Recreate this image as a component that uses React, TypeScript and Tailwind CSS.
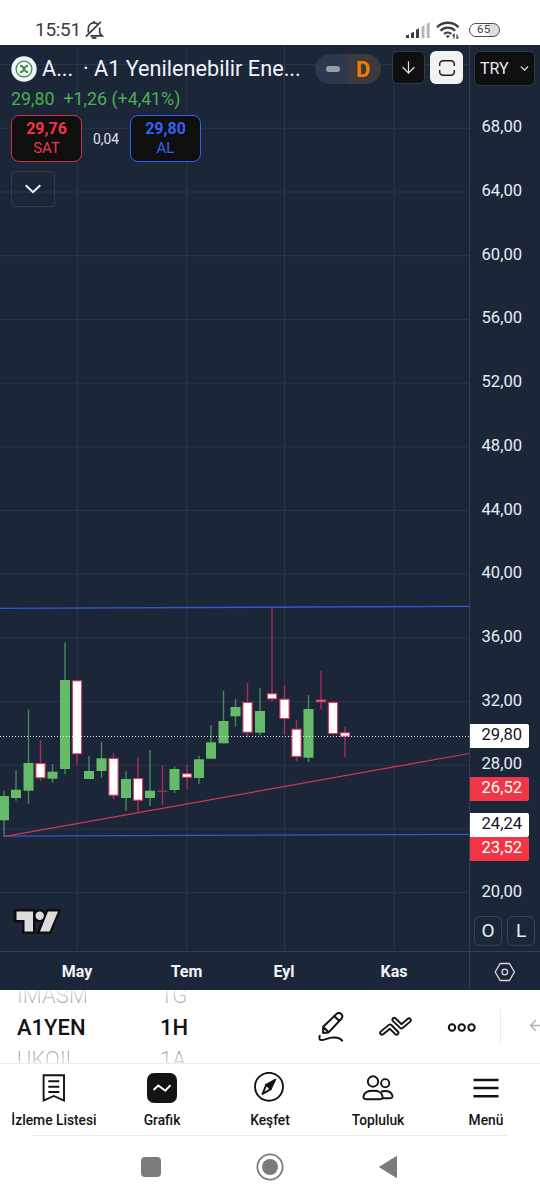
import { ArrowDown, ArrowLeft, ChevronDown } from 'lucide-react';

interface Candle {
  x: number;
  top: number;
  bottom: number;
  high: number;
  low: number;
  up: boolean;
}

const c = (x: number, top: number, bottom: number, high: number, low: number, up: boolean): Candle => ({
  x, top, bottom, high, low, up
});

const candles: Candle[] = [
  c(4, 796, 820.3, 790.7, 836.7, true),
  c(16, 789.7, 798, 770.3, 800.7, true),
  c(28.5, 763, 790.7, 709.7, 803.7, true),
  c(40.5, 763, 778.3, 740, 781, false),
  c(52.5, 771.7, 778.7, 764, 782.7, true),
  c(65, 680, 769, 642.3, 774.3, true),
  c(77, 680.3, 754.3, 680.3, 765, false),
  c(89, 771, 779, 756, 779, true),
  c(101.5, 758.3, 771, 741.7, 777.7, true),
  c(113.5, 758, 795.7, 753, 799.3, false),
  c(126, 779, 798, 771.3, 811, true),
  c(138, 778, 800.7, 757.3, 812, false),
  c(150, 790.7, 798, 750, 806, true),
  c(162.5, 790.5, 791.5, 765.7, 805, false),
  c(174.5, 769, 790, 766.7, 793, true),
  c(187, 773.3, 777.7, 764.7, 789, false),
  c(199, 759.3, 778, 756, 783.7, true),
  c(211, 742.3, 758.7, 725, 758.7, true),
  c(223.5, 721, 743.3, 690.7, 743.3, true),
  c(235.5, 707, 716.3, 699, 726.7, true),
  c(247.5, 702, 732.7, 683, 737.7, false),
  c(260, 711, 732.7, 688, 735, true),
  c(272, 693.3, 699.3, 607.5, 701.5, false),
  c(284.5, 698.7, 719, 685.3, 735, false),
  c(296.5, 728.7, 757, 720, 761, false),
  c(308.5, 709, 757.7, 695, 762, true),
  c(321, 699.7, 702.2, 670.7, 709, false),
  c(333, 702, 734, 701, 735, false),
  c(345, 732.3, 736.7, 726.7, 757.3, false)
];

const gridX = [77, 187, 284.5, 394];
const gridY = [64.5, 128.3, 192, 255.7, 319.4, 383.1, 446.8, 510.5, 574.2, 637.9, 701.6, 765.3, 829, 892.7];
const prices = ['68,00', '64,00', '60,00', '56,00', '52,00', '48,00', '44,00', '40,00', '36,00', '32,00', '28,00', '', '20,00'];

function StatusBar() {
  return (
    <div className="flex h-[45px] items-end justify-between bg-white pr-10 pb-[3px] pl-[35px] text-[#3c3c3c]">
      <div className="flex items-center">
        <span className="text-[19px] leading-6 tracking-[-0.3px]">15:51</span>
        <svg className="ml-1 h-5 w-[19px]" viewBox="0 0 19 20" fill="none" stroke="currentColor" strokeWidth="1.7">
          <path d="M3.3 12.5V8.7c0-3.3 2.2-5.8 5.6-5.8 1.8 0 3.2.6 4.2 1.7M14.7 7.5v5.7l2.5 2.7H5.3M.8 16.6 15.8 1.9" />
          <path d="M6.8 17.9h4.6" strokeWidth="1.9" />
          <path d="M9 1v2" />
        </svg>
      </div>
      <div className="flex h-6 items-center">
        <svg className="h-4 w-6" viewBox="0 0 24 16">
          <path d="M0 16v-2.4l3-1V16zM5 16v-5l3-1.3V16zM10 16V7.8l3-1.6V16z" fill="#3c3c3c" />
          <path d="M15.5 16V4.5l3-1.6V16zM20.7 16V1.7l3-1.5V16z" fill="#b7b7b7" />
        </svg>
        <svg className="ml-1.5 h-[18px] w-6" viewBox="0 0 24 18" fill="none" stroke="currentColor" strokeWidth="2.3">
          <path d="M1 6.2a15.3 15.3 0 0 1 21.6 0M4.5 9.7a10.3 10.3 0 0 1 14.6 0M8 13a5.6 5.6 0 0 1 7.3-.2" />
          <path d="M9.5 14.5h4.6l-2.3 2.8z" fill="currentColor" stroke="none" />
          <path d="M18 17.5v-4l-1.5 1.5M21 13.3v4l1.5-1.5" strokeWidth="1.2" />
        </svg>
        <div className="ml-[9px] flex h-[14px] w-[31px] items-center rounded-full border-[1.3px] border-[#4a4a4a] bg-[linear-gradient(90deg,#fff_65%,#dddddd_65%)] pl-[7px] text-[11.5px] leading-none tracking-wide">
          65
        </div>
      </div>
    </div>
  );
}

function PriceChart() {
  return (
    <svg className="block h-[906px] w-[469px]" viewBox="0 45 469 906">
      <g stroke="#2b3547" strokeWidth="1">
        {gridX.map((x) => (
          <line key={x} x1={x} x2={x} y1="45" y2="951" />
        ))}
        {gridY.map((y) => (
          <line key={y} x1="0" x2="469" y1={y} y2={y} />
        ))}
      </g>
      {candles.map((k) => (
        <g key={k.x}>
          <line
            x1={k.x}
            x2={k.x}
            y1={k.high}
            y2={k.low}
            stroke={k.up ? '#468a59' : '#ad2b5c'}
            strokeWidth="1.4"
          />
          {k.up ? (
            <rect x={k.x - 5} y={k.top} width="10" height={k.bottom - k.top} fill="#66bb6a" />
          ) : (
            <rect
              x={k.x - 4.6}
              y={k.top + 0.5}
              width="9.2"
              height={Math.max(k.bottom - k.top - 1, 0.2)}
              fill="#ffffff"
              stroke={k.bottom - k.top < 2 ? '#8b3154' : '#d63a5c'}
              strokeWidth="1.1"
            />
          )}
        </g>
      ))}
      <line x1="0" y1="608.3" x2="469" y2="606.4" stroke="#2f5bd0" strokeWidth="1.3" />
      <line x1="4" y1="836.2" x2="469" y2="834.3" stroke="#2f5bd0" strokeWidth="1.3" />
      <line x1="4" y1="836.7" x2="469" y2="753.5" stroke="#d03a51" strokeWidth="1.2" />
      <line x1="0" y1="736.5" x2="469" y2="736.5" stroke="#e8eaee" strokeWidth="1" strokeDasharray="1 2" />
    </svg>
  );
}

function ChartHeader() {
  return (
    <div className="absolute top-0 left-0 w-[469px] pl-[11px]">
      <div className="flex h-12 items-center">
        <svg className="h-[26px] w-[26px] shrink-0" viewBox="0 0 26 26">
          <circle cx="13" cy="13" r="12.7" fill="#f0f3fa" />
          <g fill="none" stroke="#388e3c" strokeWidth="1.3">
            <circle cx="13" cy="13" r="7.9" />
            <path d="M9 9.8c2.6 0 3 1.2 4 3.2s1.4 3.2 4 3.2" strokeWidth="1.9" />
            <path d="M17 9.8c-2.2 0-2.8 1-3.8 3-1 2.2-1.6 3.4-4.2 3.4" strokeWidth="1.9" />
          </g>
        </svg>
        <span className="ml-[5px] w-[30px] text-[21.7px] text-[#f0f3fa]">A...</span>
        <span className="ml-[11px] w-[220px] text-[21.7px] whitespace-nowrap text-[#f0f3fa]">· A1 Yenilenebilir Ene...</span>
        <div className="ml-3 flex h-[30px] w-[66px] shrink-0 overflow-hidden rounded-full">
          <div className="flex w-8 items-center justify-center bg-[#2c384d] pl-1">
            <div className="h-1.5 w-3.5 rounded-sm bg-[#9a9da5]" />
          </div>
          <div className="flex flex-1 items-center bg-[#3c3a3d] pl-[9px] text-[22px] font-bold text-[#f57c00]">D</div>
        </div>
        <button className="-mt-[3px] ml-[11px] flex h-[33px] w-[33px] shrink-0 items-center justify-center rounded-md border border-[#34373d] bg-[#0f0f0f] text-[#e4e4e4]">
          <ArrowDown size={19} strokeWidth={1.5} />
        </button>
        <button className="-mt-[3px] ml-[5px] flex h-[33px] w-[33px] shrink-0 items-center justify-center rounded-md bg-[#f2f2f2]">
          <svg className="h-4 w-4" viewBox="0 0 16 16" fill="none" stroke="#1c1c1c" strokeWidth="1.4">
            <path d="M.7 6V4A3.3 3.3 0 0 1 4 .7h8A3.3 3.3 0 0 1 15.3 4v2M.7 10v2A3.3 3.3 0 0 0 4 15.3h8a3.3 3.3 0 0 0 3.3-3.3v-2" />
          </svg>
        </button>
      </div>
      <div className="flex h-[22px] items-start gap-[9px] text-[17.8px] leading-[12px] text-[#4caf50]">
        <span>29,80</span>
        <span>+1,26 (+4,41%)</span>
      </div>
      <div className="flex items-center">
        <div className="flex h-[47px] w-[71px] flex-col items-center rounded-lg border border-[#d32f45] bg-[#0f0f0f] pt-[3px] text-[#f23645]">
          <span className="text-base leading-5 font-bold">29,76</span>
          <span className="text-[15px] leading-[19px]">SAT</span>
        </div>
        <span className="w-[48px] pt-px text-center text-[13.8px] text-[#e0e3eb]">0,04</span>
        <div className="flex h-[47px] w-[71px] flex-col items-center rounded-lg border border-[#2962ff] bg-[#0f0f0f] pt-[3px] text-[#2f62f5]">
          <span className="text-base leading-5 font-bold">29,80</span>
          <span className="text-[15px] leading-[19px]">AL</span>
        </div>
      </div>
      <button className="mt-[9px] flex h-[36px] w-[44px] items-center justify-center rounded border border-[#363a45] text-[#f0f3fa]">
        <svg className="h-2.5 w-4" viewBox="0 0 16 10" fill="none" stroke="currentColor" strokeWidth="2">
          <path d="m.7 1.2 7.3 7 7.3-7" />
        </svg>
      </button>
    </div>
  );
}

function PriceAxis() {
  return (
    <div className="relative flex h-[906px] w-[71px] flex-col border-l border-[#343e50] text-[16.6px] text-[#e9ecf2]">
      <button className="mt-1.5 ml-1 flex h-[35px] w-[61px] items-center justify-between rounded-md border border-[#34373d] bg-[#0f0f0f] pr-[3px] pl-[5px] text-base">
        <span>TRY</span>
        <ChevronDown size={13} strokeWidth={2.4} />
      </button>
      <div className="mt-[10px] flex flex-col">
        {prices.map((price, i) => (
          <div key={i} className="flex h-[63.7px] items-center pl-[11.5px]">{price}</div>
        ))}
      </div>
      <div className="absolute top-[679px] left-0 flex h-6 w-[59px] items-center rounded-r-xs bg-white pb-0.5 pl-[11.5px] text-[#131722]">29,80</div>
      <div className="absolute top-[732px] left-0 flex h-6 w-[59px] items-center rounded-r-xs bg-[#f23645] pb-px pl-[11.5px] text-white">26,52</div>
      <div className="absolute top-[768px] left-0 flex h-6 w-[59px] items-center rounded-r-xs bg-white pb-px pl-[11.5px] text-[#131722]">24,24</div>
      <div className="absolute top-[792px] left-0 flex h-6 w-[59px] items-center rounded-r-xs bg-[#f23645] pb-px pl-[11.5px] text-white">23,52</div>
      <div className="absolute top-[871px] left-1 flex gap-[5px] text-[19px]">
        <button className="flex h-[30px] w-7 items-center justify-center rounded-md border border-[#3c4453]">O</button>
        <button className="flex h-[30px] w-7 items-center justify-center rounded-md border border-[#3c4453]">L</button>
      </div>
    </div>
  );
}

function TimeAxis() {
  return (
    <div className="flex h-[39px] border-t border-[#343e50] text-base font-bold text-[#f0f3fa]">
      <div className="flex w-[469px] items-center pt-0.5 pl-[22px]">
        <span className="w-[110px] text-center">May</span>
        <span className="w-[109px] text-center">Tem</span>
        <span className="w-[86px] text-center">Eyl</span>
        <span className="w-[134px] text-center">Kas</span>
      </div>
      <div className="flex flex-1 items-center justify-center border-l border-[#343e50] pt-px">
        <svg className="h-5 w-[22px]" viewBox="0 0 22 20" fill="none" stroke="#d5d8df" strokeWidth="1.3">
          <path d="M6.2 1.5h9.2l5 8.5-5 8.5H6.2L1.2 10z" />
          <circle cx="10.8" cy="10" r="2.8" />
        </svg>
      </div>
    </div>
  );
}

function TradingViewLogo() {
  return (
    <svg className="absolute top-[862px] left-[13px] h-[29px] w-[49px]" viewBox="0 0 49 29">
      <g stroke="#0f0f0f" strokeWidth="5">
        <path d="M3 4.5h17v20H11.5V13H3z" />
        <circle cx="26.5" cy="8.7" r="4" />
        <path d="M35 4.5h9.5L36.3 24.5H27z" />
      </g>
      <g fill="#dcdcdc">
        <path d="M3.5 4.5H20v20h-8.5V13h-8z" />
        <circle cx="26.7" cy="8.7" r="4.2" />
        <path d="M35 4.5h10L36.6 24.5H27z" />
      </g>
    </svg>
  );
}

function Toolbar() {
  return (
    <div className="flex h-[74px] border-b border-[#ededed] bg-white text-[#131313]">
      <div className="flex w-[160px] flex-col overflow-hidden pl-[17px] text-[22px]">
        <span className="-mt-2 h-7 bg-linear-to-b from-[#f0f0f0] from-20% to-[#8f8f8f] bg-clip-text leading-7 font-light text-transparent">IMASM</span>
        <span className="mt-[2px] h-8 leading-8 font-medium">A1YEN</span>
        <span className="mt-0.5 h-7 bg-linear-to-b from-[#8f8f8f] to-[#f0f0f0] to-80% bg-clip-text leading-7 font-light text-transparent">UKOIL</span>
      </div>
      <div className="flex w-[156px] flex-col overflow-hidden text-[22px]">
        <span className="-mt-2 h-7 bg-linear-to-b from-[#f0f0f0] from-20% to-[#8f8f8f] bg-clip-text leading-7 font-light text-transparent">1G</span>
        <span className="mt-[2px] h-8 leading-8 font-medium">1H</span>
        <span className="mt-0.5 h-7 bg-linear-to-b from-[#8f8f8f] to-[#f0f0f0] to-80% bg-clip-text leading-7 font-light text-transparent">1A</span>
      </div>
      <div className="flex flex-1 items-center overflow-hidden">
        <svg className="mt-0.5 ml-px h-8 w-7 shrink-0" viewBox="0 0 28 32" fill="none" stroke="currentColor" strokeWidth="2" strokeLinejoin="round">
          <path d="M6.2 14.8 19.5 1.9c1.5-1.4 3.2-1.3 4.7.1s1.6 3.2.2 4.7L11.6 20.4l-5.5.6zM17.3 4l5 5M6.4 15l5.2 5.2" />
          <path d="M3.3 23.3c-1.6 1.6-1.2 4.8 1 4.8 4.2 0 7-2.9 12.5-2.7 4 .1 7.8 1.2 8.7 4" />
        </svg>
        <svg className="mt-px ml-[33px] h-6 w-[34px] shrink-0" viewBox="0 0 34 24" fill="none" stroke="currentColor" strokeLinejoin="round" strokeLinecap="round">
          <path d="m4 17.8 8-6.5 6.5 6.5" strokeWidth="5.6" />
          <path d="m16.3 4.8 7.1 6.8 7.6-6.4" strokeWidth="5.6" />
          <path d="m4 17.8 8-6.5 6.5 6.5M16.3 4.8l7.1 6.8 7.6-6.4" stroke="#ffffff" strokeWidth="1.8" />
        </svg>
        <svg className="ml-[35px] h-3 w-[30px] shrink-0" viewBox="0 0 30 12" fill="none" stroke="currentColor" strokeWidth="2">
          <circle cx="5" cy="6.5" r="3.2" />
          <circle cx="14.7" cy="6.5" r="3.2" />
          <circle cx="24.5" cy="6.5" r="3.2" />
        </svg>
        <div className="ml-[23px] h-[34px] w-px shrink-0 bg-[#ececec]" />
        <ArrowLeft className="-mt-0.5 ml-[26px] shrink-0 text-[#b0b0b0]" size={17} strokeWidth={2} />
      </div>
    </div>
  );
}

function TabBar() {
  return (
    <div className="grid h-[71px] grid-cols-5 bg-white text-[13.8px] font-medium text-[#131313]">
      <div className="flex flex-col items-center pt-2">
        <svg className="h-8 w-8" viewBox="0 0 32 32" fill="none" stroke="currentColor" strokeWidth="1.9">
          <path d="M5.6 3.2H26v25.3L15.8 24 5.6 28.5z" />
          <path d="M10.3 9.2h11M10.3 14.7h11M10.3 20h11" />
        </svg>
        <span className="mt-1.5 whitespace-nowrap">İzleme Listesi</span>
      </div>
      <div className="flex flex-col items-center pt-2">
        <svg className="h-8 w-8" viewBox="0 0 32 32" fill="none">
          <rect x="1" y="1" width="30" height="30" rx="7" fill="#131313" />
          <path d="m7.5 18 4.8-4.5 7 5.2 5.2-5.5" stroke="#ffffff" strokeWidth="1.9" />
        </svg>
        <span className="mt-1.5">Grafik</span>
      </div>
      <div className="flex flex-col items-center pt-2">
        <svg className="h-8 w-8" viewBox="0 0 32 32" fill="none" stroke="currentColor" strokeWidth="1.9">
          <circle cx="15" cy="14.8" r="14" />
          <path d="m12.3 12.6 9.2-5.1-4.7 9.6z" fill="currentColor" strokeLinejoin="round" strokeWidth="1.6" />
          <path d="m12.3 12.6 4.5 4.5-8.2 4.8z" strokeLinejoin="round" />
        </svg>
        <span className="mt-1.5">Keşfet</span>
      </div>
      <div className="flex flex-col items-center pt-2">
        <svg className="h-8 w-8" viewBox="0 0 32 32" fill="none" stroke="currentColor" strokeWidth="1.9">
          <circle cx="11" cy="9.5" r="5.2" />
          <circle cx="23.2" cy="11.2" r="4.1" />
          <path d="M4 27.2h14c2.5 0 2.9-1.3 2.4-3.2-1-3.8-3.2-5.2-9.3-5.2s-8.6 1.4-9.5 5.2c-.4 1.9 0 3.2 2.4 3.2zM20 26.2h8c2.2 0 2.9-1 2.3-3-1-3.2-3.2-4.2-7.3-4.2-1.8 0-3 .2-4 .6" />
        </svg>
        <span className="mt-1.5">Topluluk</span>
      </div>
      <div className="flex flex-col items-center pt-2">
        <svg className="h-8 w-8" viewBox="0 0 32 32" stroke="currentColor" strokeWidth="2.5">
          <path d="M3.5 8h25M3.5 16h25M3.5 24.3h25" />
        </svg>
        <span className="mt-1.5">Menü</span>
      </div>
    </div>
  );
}

function SystemNav() {
  return (
    <div className="bg-white px-8">
      <div className="flex h-[65px] items-center border-t border-[#ececec] pb-[3px] pl-[109px]">
        <div className="h-5 w-5 rounded bg-[#7b7b7b]" />
        <svg className="ml-[95px] h-7 w-7" viewBox="0 0 28 28">
          <circle cx="14" cy="14" r="12.6" fill="none" stroke="#7b7b7b" strokeWidth="1.8" />
          <circle cx="14" cy="14" r="8" fill="#7b7b7b" />
        </svg>
        <svg className="ml-[94px] h-6 w-5" viewBox="0 0 20 24">
          <path d="M1.5 12 18.5 1.5v21z" fill="#7b7b7b" stroke="#7b7b7b" strokeLinejoin="round" />
        </svg>
      </div>
    </div>
  );
}

export default function App() {
  return (
    <div className="flex h-[1200px] w-[540px] flex-col overflow-hidden bg-white font-[Roboto,sans-serif]">
      <StatusBar />
      <div className="relative h-[945px] bg-[#1c2639]">
        <div className="flex">
          <PriceChart />
          <PriceAxis />
        </div>
        <TimeAxis />
        <ChartHeader />
        <TradingViewLogo />
      </div>
      <Toolbar />
      <TabBar />
      <SystemNav />
    </div>
  );
}
